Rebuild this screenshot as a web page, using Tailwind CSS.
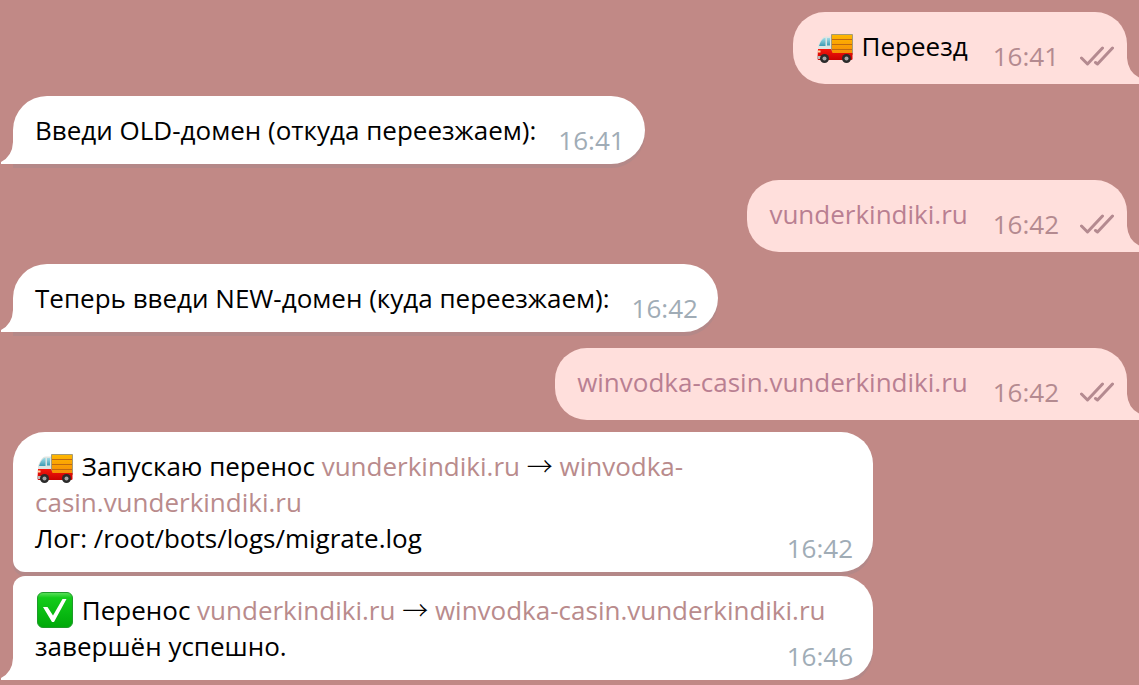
<!DOCTYPE html>
<html lang="ru">
<head>
    <meta charset="UTF-8">
    <meta name="viewport" content="width=device-width, initial-scale=1.0">
    <title>Переезд</title>
    <script src="https://cdn.jsdelivr.net/npm/@tailwindcss/browser@4"></script>
</head>
<body class="bg-[#c18986] font-['Open_Sans','Noto_Sans',sans-serif] text-[26px] leading-9 text-black overflow-x-hidden">
    <!-- Shared icons -->
    <svg class="absolute w-0 h-0">
        <defs>
            <linearGradient id="cargo" x1="0" y1="0" x2="0" y2="1">
                <stop offset="0" stop-color="#ffb800"/>
                <stop offset="1" stop-color="#f58a07"/>
            </linearGradient>
            <linearGradient id="cab" x1="0" y1="0" x2="0" y2="1">
                <stop offset="0" stop-color="#f5170c"/>
                <stop offset="1" stop-color="#c80000"/>
            </linearGradient>
            <linearGradient id="glass" x1="0" y1="0" x2="0" y2="1">
                <stop offset="0" stop-color="#9fdbe6"/>
                <stop offset="1" stop-color="#3d9db5"/>
            </linearGradient>
            <linearGradient id="green" x1="0" y1="0" x2="0" y2="1">
                <stop offset="0" stop-color="#5fe05f"/>
                <stop offset="0.15" stop-color="#12cc1a"/>
                <stop offset="1" stop-color="#00a80a"/>
            </linearGradient>
        </defs>
        <symbol id="truck" viewBox="0 0 36 36">
            <path d="M14.500 3.500h21v20h-21z" fill="url(#cargo)" stroke="#a39a78" stroke-width="1"/>
            <path d="M15 8.500h20M15 13.500h20M15 18.500h20" stroke="#c06a10" stroke-width="1"/>
            <path d="M6 6.500Q7 5.500 9 5.500h5V20H1L1 15Q3 9 6 6.500z" fill="#dfe5e2"/>
            <path d="M7 7h1.500v8H2Q3.500 9.500 7 7z" fill="url(#glass)"/>
            <path d="M10 7h3v7.500h-3z" fill="url(#glass)"/>
            <path d="M1 18h13l1.500 4h20v6Q35.500 29 34 29H2Q.500 29 .500 27.500z" fill="url(#cab)"/>
            <path d="M.500 25h4v3h-4z" fill="#b9b9b9"/>
            <path d="M1 19.500h2.500v2H1z" fill="#ffd9a0"/>
            <circle cx="7.500" cy="27.500" r="4.500" fill="#2b2b2b"/>
            <circle cx="7.500" cy="27.500" r="2" fill="#a5a5a5"/>
            <circle cx="29.500" cy="27.500" r="4.500" fill="#2b2b2b"/>
            <circle cx="29.500" cy="27.500" r="2" fill="#a5a5a5"/>
        </symbol>
        <symbol id="check" viewBox="0 0 36 36">
            <rect x=".5" y=".5" width="35" height="35" rx="5.500" fill="url(#green)" stroke="#1f9a2a"/>
            <path d="M6 15h4.500l5.500 8.500L25.500 7H29.500L17 30h-2z" fill="#fff"/>
        </symbol>
        <symbol id="read" viewBox="0 0 34 20">
            <path d="M1.500 12l6 6L22.500 2M15.500 16.500l2 1.500L32.500 2" fill="none" stroke="#b48a90" stroke-width="3" stroke-linecap="round" stroke-linejoin="round"/>
        </symbol>
        <symbol id="tail-in" viewBox="0 0 12 26">
            <path d="M12 0v26H0v-2Q11.500 18 12 4z" fill="currentColor"/>
        </symbol>
        <symbol id="tail-out" viewBox="0 0 12 26">
            <path d="M0 0v26h12v-6.500Q1 14 0 0z" fill="currentColor"/>
        </symbol>
    </svg>

    <main class="flex flex-col items-start pt-3 pl-[13px] pr-3">
        <!-- Outgoing -->
        <article class="relative self-end flex items-end gap-[25px] mb-3 pt-4 pl-[22px] pr-[13px] bg-[#ffdfdc] rounded-[32px] rounded-br-none">
            <p class="pb-5"><svg class="inline-block align-top w-9 h-9 ml-[2px] mr-[2px] mt-[3px] -mb-[3px]" role="img" aria-label="🚚"><use href="#truck"/></svg> Переезд</p>
            <div class="flex items-center gap-[21px] pb-[10px] text-[#b48a90]">
                <time>16:41</time>
                <svg class="w-[34px] h-5"><use href="#read"/></svg>
            </div>
            <svg class="absolute left-full bottom-0 w-3 h-[26px] text-[#ffdfdc]"><use href="#tail-out"/></svg>
        </article>

        <!-- Incoming -->
        <article class="relative flex items-end gap-[22px] mb-4 pt-4 pl-[22px] pr-5 bg-white rounded-[34px] rounded-bl-none shadow-[0_4px_0_#b48888]">
            <p class="pb-4">Введи OLD-домен (откуда переезжаем):</p>
            <time class="pb-[6px] text-[#a0acb6]">16:41</time>
            <svg class="absolute right-full bottom-0 w-3 h-[26px] text-white"><use href="#tail-in"/></svg>
        </article>

        <article class="relative self-end flex items-end gap-[25px] mb-3 pt-4 pl-[22px] pr-[13px] bg-[#ffdfdc] rounded-[32px] rounded-br-none">
            <p class="pb-5"><a href="#" class="text-[#b97f92]">vunderkindiki.ru</a></p>
            <div class="flex items-center gap-[21px] pb-[10px] text-[#b48a90]">
                <time>16:42</time>
                <svg class="w-[34px] h-5"><use href="#read"/></svg>
            </div>
            <svg class="absolute left-full bottom-0 w-3 h-[26px] text-[#ffdfdc]"><use href="#tail-out"/></svg>
        </article>

        <article class="relative flex items-end gap-[22px] mb-4 pt-4 pl-[22px] pr-5 bg-white rounded-[34px] rounded-bl-none shadow-[0_4px_0_#b48888]">
            <p class="pb-4">Теперь введи NEW-домен (куда переезжаем):</p>
            <time class="pb-[6px] text-[#a0acb6]">16:42</time>
            <svg class="absolute right-full bottom-0 w-3 h-[26px] text-white"><use href="#tail-in"/></svg>
        </article>

        <article class="relative self-end flex items-end gap-[25px] mb-3 pt-4 pl-[22px] pr-[13px] bg-[#ffdfdc] rounded-[32px] rounded-br-none">
            <p class="pb-5"><a href="#" class="text-[#b97f92]">winvodka-casin.vunderkindiki.ru</a></p>
            <div class="flex items-center gap-[21px] pb-[10px] text-[#b48a90]">
                <time>16:42</time>
                <svg class="w-[34px] h-5"><use href="#read"/></svg>
            </div>
            <svg class="absolute left-full bottom-0 w-3 h-[26px] text-[#ffdfdc]"><use href="#tail-out"/></svg>
        </article>

        <!-- Grouped incoming, the time shares the cell with the text -->
        <article class="grid w-full max-w-[860px] mb-1 pt-4 pl-[22px] pr-5 bg-white rounded-[32px] rounded-bl-[12px] shadow-[0_4px_0_#b48888]">
            <p class="col-start-1 row-start-1 pb-4">
                <svg class="inline-block align-top w-9 h-9 ml-[2px] mr-[2px] mt-[3px] -mb-[3px]" role="img" aria-label="🚚"><use href="#truck"/></svg>
                Запускаю перенос <a href="#" class="text-[#b98b8c]">vunderkindiki.ru</a> <span class="font-['Noto_Sans_CJK_JP',sans-serif] font-light leading-none">→</span> <a href="#" class="text-[#b98b8c]">winvodka-casin.vunderkindiki.ru</a><br>
                Лог: /root/bots/logs/migrate.log
            </p>
            <time class="col-start-1 row-start-1 self-end justify-self-end pb-[6px] text-[#a0acb6]">16:42</time>
        </article>

        <article class="relative grid w-full max-w-[860px] pt-4 pl-[22px] pr-5 bg-white rounded-[32px] rounded-tl-[12px] rounded-bl-none shadow-[0_4px_0_#b48888]">
            <p class="col-start-1 row-start-1 pb-4">
                <svg class="inline-block align-top w-9 h-9 ml-[2px] mr-[2px]" role="img" aria-label="✅"><use href="#check"/></svg>
                Перенос <a href="#" class="text-[#b98b8c]">vunderkindiki.ru</a> <span class="font-['Noto_Sans_CJK_JP',sans-serif] font-light leading-none">→</span> <a href="#" class="text-[#b98b8c]">winvodka-casin.vunderkindiki.ru</a> завершён успешно.
            </p>
            <time class="col-start-1 row-start-1 self-end justify-self-end pb-[6px] text-[#a0acb6]">16:46</time>
            <svg class="absolute right-full bottom-0 w-3 h-[26px] text-white"><use href="#tail-in"/></svg>
        </article>
    </main>
</body>
</html>
